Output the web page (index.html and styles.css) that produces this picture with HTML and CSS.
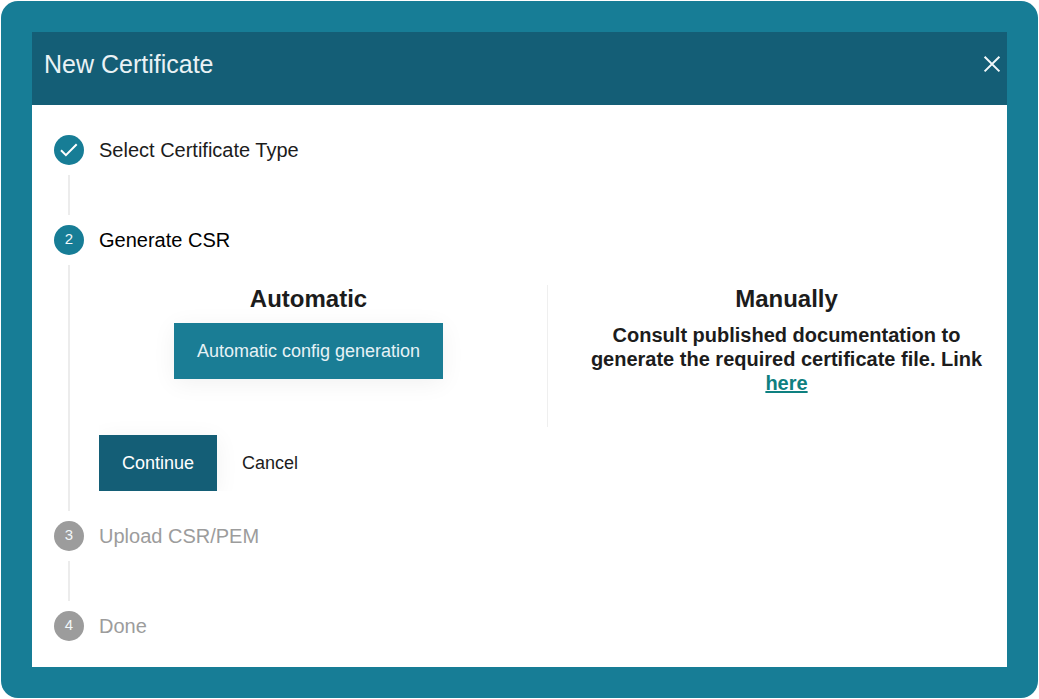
FILE: index.html
```
<!DOCTYPE html>
<html lang="en">
<head>
<meta charset="utf-8">
<meta name="viewport" content="width=device-width, initial-scale=1">
<title>New Certificate</title>
<link rel="stylesheet" href="styles.css">
</head>
<body>
<main class="backdrop">
  <section class="dialog" role="dialog" aria-labelledby="dialog-title">
    <header class="dialog-header">
      <h1 class="dialog-title" id="dialog-title">New Certificate</h1>
      <button class="close" type="button" aria-label="Close">
        <svg class="close-icon" viewBox="0 0 18 18" aria-hidden="true"><path d="M1.6 1.8 16.4 16.4M16.4 1.8 1.6 16.4"/></svg>
      </button>
    </header>
    <ol class="steps">
      <li class="step">
        <div class="rail">
          <span class="marker">
            <svg class="check-icon" viewBox="0 0 30 30" aria-hidden="true"><path d="M7 15.3 11.9 20.1 22.7 9.2"/></svg>
          </span>
        </div>
        <h2 class="step-title">Select Certificate Type</h2>
      </li>
      <li class="step step-current">
        <div class="rail"><span class="marker">2</span></div>
        <div class="step-main">
          <h2 class="step-title">Generate CSR</h2>
          <div class="panel">
            <div class="options">
              <div class="option">
                <h3 class="option-title">Automatic</h3>
                <button class="button button-light" type="button">Automatic config generation</button>
              </div>
              <div class="option">
                <h3 class="option-title">Manually</h3>
                <p class="option-text">Consult published documentation to generate the required certificate file. Link <a class="link" href="#">here</a></p>
              </div>
            </div>
            <div class="actions">
              <button class="button button-dark" type="button">Continue</button>
              <button class="button button-plain" type="button">Cancel</button>
            </div>
          </div>
        </div>
      </li>
      <li class="step step-pending">
        <div class="rail"><span class="marker">3</span></div>
        <h2 class="step-title">Upload CSR/PEM</h2>
      </li>
      <li class="step step-pending">
        <div class="rail"><span class="marker">4</span></div>
        <h2 class="step-title">Done</h2>
      </li>
    </ol>
  </section>
</main>
</body>
</html>
```
FILE: styles.css
```
* {
  box-sizing: border-box;
}

body {
  margin: 0;
  padding: 1px;
  background: #fff;
  color: #1c1c1c;
  font-family: "Liberation Sans", Arial, sans-serif;
}

h1, h2, h3, p, ol {
  margin: 0;
  padding: 0;
}

.backdrop {
  padding: 31px;
  border-radius: 17px;
  background: #177d96;
}

.dialog {
  background: #fff;
}

.dialog-header {
  display: flex;
  justify-content: space-between;
  align-items: flex-start;
  padding: 16px 6px 25px 12px;
  background: #145e76;
}

.dialog-title {
  color: #eaf2f5;
  font-size: 25px;
  font-weight: 400;
  line-height: 32px;
}

.close {
  display: flex;
  align-items: center;
  height: 32px;
  padding: 0;
  border: 0;
  background: none;
  cursor: pointer;
}

.close-icon {
  width: 18px;
  height: 18px;
  fill: none;
  stroke: #f2f8fa;
  stroke-width: 2;
}

.steps {
  padding: 30px 11px 26px 22px;
  list-style: none;
}

.step {
  display: grid;
  grid-template-columns: 30px minmax(0, 1fr);
  column-gap: 15px;
  min-height: 90px;
}

.step:last-child {
  min-height: 30px;
}

.rail {
  display: flex;
  flex-direction: column;
  align-items: center;
}

.step:not(:last-child) .rail::after {
  content: "";
  flex: 1;
  width: 2px;
  margin: 10px 0;
  background: #ececec;
}

.marker {
  display: flex;
  align-items: center;
  justify-content: center;
  width: 30px;
  height: 30px;
  border-radius: 50%;
  background: #177d96;
  color: #f2f8fa;
  font-size: 15px;
  line-height: 28px;
  align-items: flex-start;
}

.check-icon {
  width: 30px;
  height: 30px;
  fill: none;
  stroke: #fff;
  stroke-width: 2;
}

.step-title {
  font-size: 20px;
  font-weight: 400;
  line-height: 30px;
}

.step-current .step-title {
  color: #000;
}

.step-pending .marker {
  background: #9c9c9c;
}

.step-pending .step-title {
  color: #9c9c9c;
}

.panel {
  overflow: hidden;
  margin-bottom: 30px;
  padding-top: 30px;
}

.options {
  display: grid;
  grid-template-columns: repeat(2, minmax(0, 1fr));
  column-gap: 59px;
  background: linear-gradient(#efefef, #efefef) center / 1px 100% no-repeat;
}

.option {
  padding-bottom: 32px;
  text-align: center;
}

.option-title {
  margin-bottom: 10px;
  font-size: 24px;
  line-height: 28px;
}

.option-text {
  font-size: 20px;
  font-weight: 700;
  line-height: 24px;
}

.link {
  color: #0e8080;
  text-decoration: underline;
}

.actions {
  display: flex;
  gap: 2px;
  margin-top: 8px;
}

.button {
  height: 56px;
  padding: 0 23px;
  border: 0;
  font-family: inherit;
  font-size: 18px;
  cursor: pointer;
}

.button-light,
.button-dark {
  box-shadow: 0 4px 24px rgba(0, 0, 0, 0.06);
}

.button-light {
  background: #1a7d95;
  color: #e6f2f5;
}

.button-dark {
  background: #145e76;
  color: #fff;
}

.button-plain {
  background: none;
  color: #1c1c1c;
}
```
